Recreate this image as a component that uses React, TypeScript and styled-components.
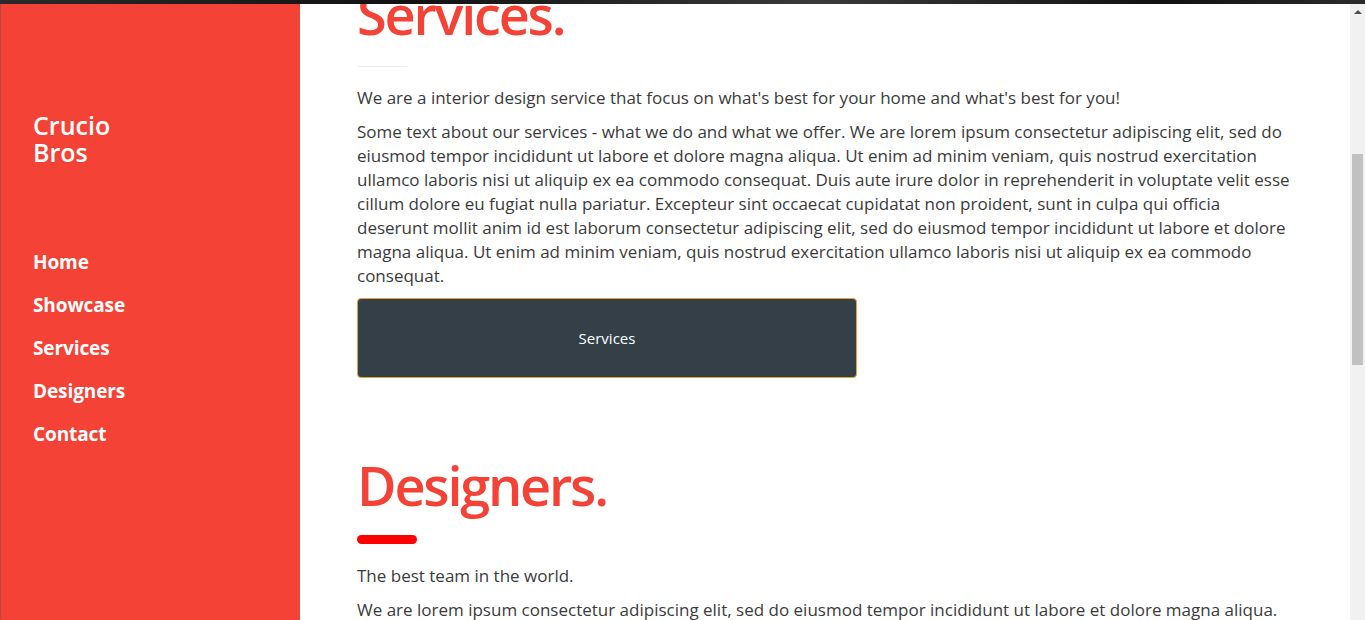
import React from "react";
import styled, { createGlobalStyle } from "styled-components";

const Global = createGlobalStyle`
  html, body { margin: 0; padding: 0; height: 100%; overflow: hidden; background: #fff; }
  body { font-family: "Open Sans", "Noto Sans", sans-serif; }
  * { box-sizing: border-box; }
`;

const Frame = styled.div`
  width: 1365px;
  height: 620px;
  display: flex;
  flex-direction: column;
  overflow: hidden;
`;

const TopEdge = styled.div`
  height: 4px;
  flex: none;
  background: linear-gradient(90deg, #2a2a2a 0%, #111 30%, #3a3a3a 60%, #111 85%, #2b2b2b 100%);
`;

const Body = styled.div`
  flex: 1;
  display: flex;
  min-height: 0;
`;

const Sidebar = styled.aside`
  width: 300px;
  flex: none;
  background: #f44336;
  border-left: 1px solid #b8493f;
  padding: 108px 0 0 32px;
  color: #fff;
`;

const Brand = styled.h1`
  margin: 0;
  font-family: "Open Sans", sans-serif;
  font-weight: 600;
  font-size: 25px;
  line-height: 27px;
  letter-spacing: 0;
`;

const Nav = styled.nav`
  margin-top: 83px;
  display: flex;
  flex-direction: column;
  gap: 17px;
`;

const NavLink = styled.a`
  font-family: "Open Sans", sans-serif;
  font-weight: 700;
  font-size: 19px;
  line-height: 26px;
  color: #fff;
  text-decoration: none;
  letter-spacing: -0.1px;
`;

const Main = styled.main`
  flex: 1;
  overflow: hidden;
  padding: 0 56px 0 57px;
`;

const Scrolled = styled.div`
  margin-top: -27px;
`;

const Section = styled.section`
  padding-bottom: 70px;
`;

const Heading = styled.h2`
  margin: 0;
  font-family: "Open Sans", sans-serif;
  font-weight: 600;
  font-size: 54px;
  line-height: 74px;
  color: #f44336;
  letter-spacing: -2.2px;
`;

const Rule = styled.div<{ $bold?: boolean }>`
  margin-top: ${(p) => (p.$bold ? "13px" : "15px")};
  width: ${(p) => (p.$bold ? "60px" : "50px")};
  height: ${(p) => (p.$bold ? "9px" : "1px")};
  border-radius: ${(p) => (p.$bold ? "5px" : "0")};
  background: ${(p) => (p.$bold ? "#ff0000" : "#ececec")};
  margin-bottom: ${(p) => (p.$bold ? "20px" : "19px")};
`;

const Text = styled.p`
  margin: 0 0 10px;
  font-family: "Open Sans", sans-serif;
  font-size: 17px;
  line-height: 24px;
  color: #3b3b3b;
`;

const Button = styled.button`
  display: block;
  margin-top: 2px;
  width: 500px;
  height: 80px;
  background: #343f47;
  border: 1px solid #e0a53a;
  border-radius: 4px;
  color: #fff;
  font-family: "Open Sans", sans-serif;
  font-size: 15px;
  cursor: pointer;
`;

const ScrollTrack = styled.div`
  width: 15px;
  flex: none;
  background: #f1f1f1;
  display: flex;
  flex-direction: column;
  align-items: center;
`;

const ScrollArrow = styled.div`
  margin-top: 6px;
  width: 0;
  height: 0;
  border-left: 4px solid transparent;
  border-right: 4px solid transparent;
  border-bottom: 4px solid #505050;
`;

const ScrollThumb = styled.div`
  margin-top: 140px;
  width: 11px;
  height: 211px;
  background: #c1c1c1;
`;

export default function App() {
  return (
    <Frame>
      <Global />
      <TopEdge />
      <Body>
        <Sidebar>
          <Brand>
            Crucio
            <br />
            Bros
          </Brand>
          <Nav>
            <NavLink href="#home">Home</NavLink>
            <NavLink href="#showcase">Showcase</NavLink>
            <NavLink href="#services">Services</NavLink>
            <NavLink href="#designers">Designers</NavLink>
            <NavLink href="#contact">Contact</NavLink>
          </Nav>
        </Sidebar>
        <Main>
          <Scrolled>
            <Section>
              <Heading>Services.</Heading>
              <Rule />
              <Text>We are a interior design service that focus on what's best for your home and what's best for you!</Text>
              <Text>
                Some text about our services - what we do and what we offer. We are lorem ipsum consectetur adipiscing elit, sed do
                eiusmod tempor incididunt ut labore et dolore magna aliqua. Ut enim ad minim veniam, quis nostrud exercitation
                ullamco laboris nisi ut aliquip ex ea commodo consequat. Duis aute irure dolor in reprehenderit in voluptate velit esse
                cillum dolore eu fugiat nulla pariatur. Excepteur sint occaecat cupidatat non proident, sunt in culpa qui officia
                deserunt mollit anim id est laborum consectetur adipiscing elit, sed do eiusmod tempor incididunt ut labore et dolore
                magna aliqua. Ut enim ad minim veniam, quis nostrud exercitation ullamco laboris nisi ut aliquip ex ea commodo
                consequat.
              </Text>
              <Button>Services</Button>
            </Section>
            <Section>
              <Heading>Designers.</Heading>
              <Rule $bold />
              <Text>The best team in the world.</Text>
              <Text>
                We are lorem ipsum consectetur adipiscing elit, sed do eiusmod tempor incididunt ut labore et dolore magna aliqua.
                Ut enim ad minim veniam, quis nostrud exercitation ullamco laboris nisi ut aliquip ex ea commodo consequat.
              </Text>
            </Section>
          </Scrolled>
        </Main>
        <ScrollTrack>
          <ScrollArrow />
          <ScrollThumb />
        </ScrollTrack>
      </Body>
    </Frame>
  );
}
